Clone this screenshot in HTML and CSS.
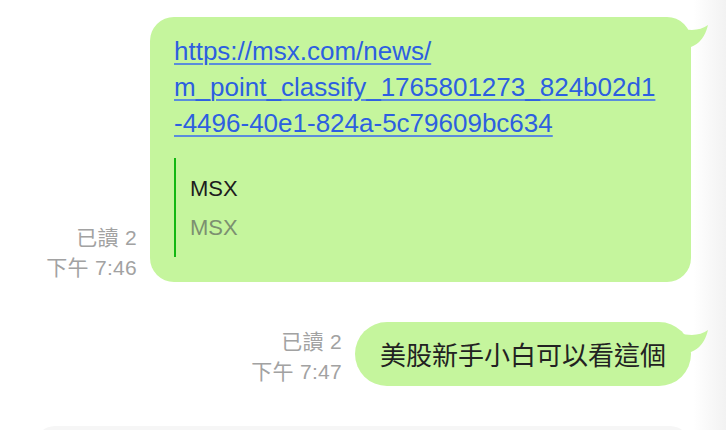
FILE: index.html
```html
<!DOCTYPE html>
<html>

<head>
    <title>Chat</title>
    <meta name="viewport" content="width=device-width, initial-scale=1">
    <link rel="stylesheet" href="styles.css">
</head>

<body>
    <div class="chat">
        <div class="row">
            <div class="meta">
                <span>已讀 2</span>
                <span>下午 7:46</span>
            </div>
            <div class="bubble bubble-link">
                <a class="link" href="#">https://msx.com/news/<br>m_point_classify_1765801273_824b02d1<br>-4496-40e1-824a-5c79609bc634</a>
                <div class="preview">
                    <div class="preview-title">MSX</div>
                    <div class="preview-desc">MSX</div>
                </div>
                <svg class="tail" width="32" height="32" viewBox="-12 0 32 32">
                    <path d="M -12 11 Q 6 16 17 8 Q 13 25 0 30 L -12 30 Z" fill="#c5f59d"/>
                </svg>
            </div>
        </div>

        <div class="row">
            <div class="meta">
                <span>已讀 2</span>
                <span>下午 7:47</span>
            </div>
            <div class="bubble bubble-text">
                美股新手小白可以看這個
                <svg class="tail" width="32" height="32" viewBox="-12 0 32 32">
                    <path d="M -12 11 Q 6 16 17 8 Q 13 25 0 30 L -12 30 Z" fill="#c5f59d"/>
                </svg>
            </div>
        </div>

        <div class="incoming"></div>
    </div>
</body>

</html>
```

FILE: styles.css
```css
body {
    margin: 0;
    padding: 0;
    height: 430px;
    overflow: hidden;
    font-family: "Liberation Sans", Arial, "Noto Sans CJK TC", sans-serif;
    background: linear-gradient(to right, #ffffff 95.5%, #f2f2f2 100%);
}

.chat {
    display: flex;
    flex-direction: column;
    gap: 40px;
    padding-top: 17px;
}

.row {
    display: flex;
    justify-content: flex-end;
    align-items: flex-end;
    gap: 13px;
    padding-right: 35px;
}

.meta {
    display: flex;
    flex-direction: column;
    align-items: flex-end;
    font-size: 21px;
    line-height: 30px;
    letter-spacing: 0.3px;
    color: #a2a2a2;
    margin-bottom: -1px;
}

.bubble {
    position: relative;
    background-color: #c5f59d;
}

.bubble-link {
    width: 541px;
    box-sizing: border-box;
    padding: 16px 24px 25px;
    border-radius: 24px;
}

.link {
    display: block;
    font-size: 26px;
    line-height: 36px;
    color: #2d5fe0;
    text-decoration: underline;
    text-decoration-color: #5a8cdc;
    text-decoration-thickness: 2px;
    text-underline-offset: 3px;
}

.preview {
    margin-top: 17px;
    border-left: 2px solid #12b812;
    padding: 11px 0 10px 14px;
    font-size: 22px;
    line-height: 39px;
}

.preview-title {
    color: #1d1d1d;
}

.preview-desc {
    color: #7c9070;
}

.bubble-text {
    height: 64px;
    line-height: 64px;
    padding: 0 25px;
    border-radius: 32px;
    font-family: "Noto Sans CJK TC", sans-serif;
    font-size: 26px;
    color: #222;
}

.tail {
    position: absolute;
    top: 0;
    right: -20px;
}

.incoming {
    margin-left: 35px;
    width: 655px;
    height: 40px;
    border-radius: 20px;
    background-color: #f6f6f6;
}
```
